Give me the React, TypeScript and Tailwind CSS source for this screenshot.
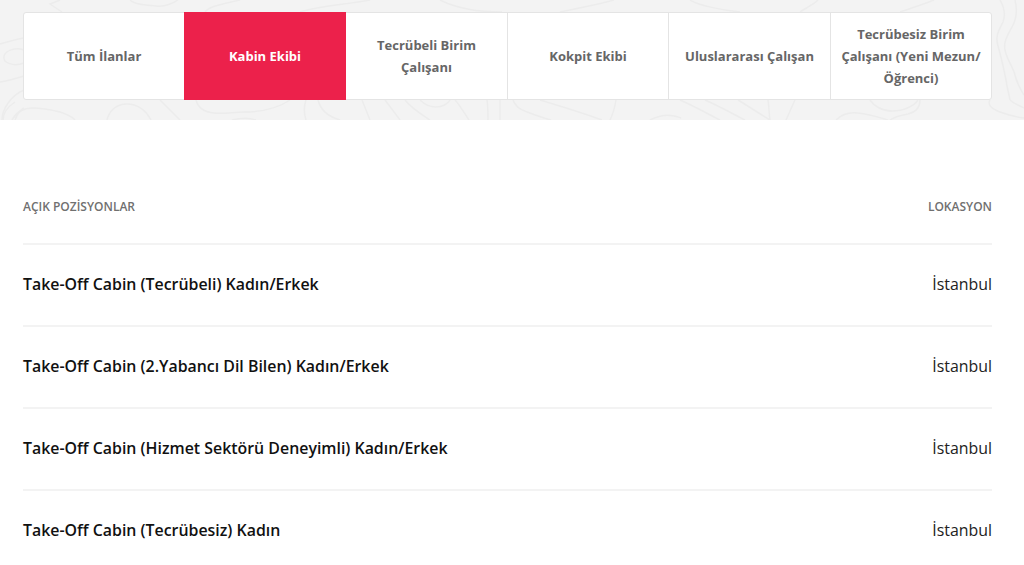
const tabs = [
  "Tüm İlanlar",
  "Kabin Ekibi",
  "Tecrübeli Birim Çalışanı",
  "Kokpit Ekibi",
  "Uluslararası Çalışan",
  "Tecrübesiz Birim Çalışanı (Yeni Mezun/ Öğrenci)",
];

const jobs = [
  "Take-Off Cabin (Tecrübeli) Kadın/Erkek",
  "Take-Off Cabin (2.Yabancı Dil Bilen) Kadın/Erkek",
  "Take-Off Cabin (Hizmet Sektörü Deneyimli) Kadın/Erkek",
  "Take-Off Cabin (Tecrübesiz) Kadın",
];

// faint contour lines behind the tab bar
const contours = [
  // top edge
  "M60 0 50 4 62 12",
  "M130 0c5 5 16 5 26 6 8 1 16-2 22-6",
  "M205 12c4-6 18-8 35-12",
  "M300 12c20-6 50-8 70-12",
  "M440 0c16 8 40 12 62 12",
  "M560 12c20-4 40-8 54-12",
  "M690 0c8 5 30 10 50 12",
  "M800 12c6-4 14-8 18-12",
  "M900 12c12-4 24-8 34-12",
  // left edge
  "M0 44c8-2 16-5 24-6",
  "M24 50c-8-3-18 0-20 6-2 7 10 11 20 7",
  "M0 82c8-1 16-4 24-6",
  "M2 120c0-10 8-24 22-30",
  "M15 120c2-5 5-10 9-12",
  // bottom left
  "M3 120c0-8 6-14 12-18",
  "M12 120c4-8 12-12 20-12 12 0 20 2 28 4 6 2 12 4 15 8",
  "M107 120c2-8 8-16 20-16 12 0 20 8 24 16",
  "M160 100l20 20",
  "M196 100c2 8 8 12 18 13 10 1 20-1 30-1 18 0 34-4 46-12",
  "M306 100c-2 6-2 14 0 20",
  "M318 100c2 8 8 16 22 20",
  "M232 120c8-2 18-2 24 0",
  // bottom middle
  "M362 100l8 20",
  "M385 100l15 20",
  "M405 100c6 8 16 14 25 20",
  "M420 100c4 4 10 7 16 7 6 0 12-3 14-7",
  "M455 100c4 4 10 14 14 20",
  "M487 100c1 6 1 14 1 20",
  "M500 100c0 6 0 14 0 20",
  "M513 100c2 6 8 10 14 12 8 3 16 6 24 8",
  "M540 100c20 6 40 12 62 20",
  "M616 100c-1 6-3 14-6 20",
  "M650 120c8-4 16-6 24-4 4 1 8 2 6 2",
  // bottom right
  "M680 100c14 6 28 14 40 20",
  "M705 100c14 6 28 14 40 20",
  "M738 100c10 6 22 14 32 20",
  "M768 100c1 6 1 14 2 20",
  "M795 100c-3 6-6 14-9 20",
  "M870 100c4 6 12 11 22 11 12 0 22-5 26-11",
  "M920 100c0 8-4 12-12 14-6 1-12 2-18 6",
  "M836 120c6-6 14-8 22-7 10 1 20 4 30 7",
  "M990 100c-3 5 2 9 10 12 8 3 16 5 24 6",
  "M1010 100c4 4 10 6 14 8",
  // right edge
  "M1000 0c4 7 6 14 3 22-4 8-8 14-5 24 3 10 6 24 8 34 1 8 3 14 4 20",
  "M1015 0c2 8 2 17-2 25-4 8-10 16-8 25 2 10 8 17 10 25 2 8 5 14 9 20",
];

function Topo() {
  return (
    <svg
      className="absolute inset-0 h-full w-full"
      viewBox="0 0 1024 120"
      fill="none"
      stroke="#ececec"
      strokeWidth="1.5"
    >
      {contours.map((d) => (
        <path key={d} d={d} />
      ))}
    </svg>
  );
}

export default function App() {
  return (
    <div className="h-[565px] w-full overflow-hidden bg-white font-['Open_Sans',sans-serif]">
      <div className="relative h-[120px] bg-[#f3f3f3] pt-3 pr-[32px] pl-[23px]">
        <Topo />
        <div className="relative grid h-[88px] grid-cols-[160px_162px_161px_161px_162px_1fr] rounded-[3px] border border-[#e4e4e4] bg-white">
          {tabs.map((tab, i) => (
            <div
              key={tab}
              className={
                i === 1
                  ? "-my-px flex items-center justify-center bg-[#ec214b] px-2 text-center text-[13px] leading-[22px] font-bold text-white"
                  : i < 3
                    ? "flex items-center justify-center px-2 text-center text-[13px] leading-[22px] font-bold text-[#666666]"
                    : "flex items-center justify-center border-l border-[#e4e4e4] px-2 text-center text-[13px] leading-[22px] font-bold text-[#666666]"
              }
            >
              {tab}
            </div>
          ))}
        </div>
      </div>
      <div className="pr-[32px] pl-[23px]">
        <div className="flex h-[125px] items-end justify-between border-b-2 border-[#f3f3f3] pb-[28px] text-[12px] leading-4 font-semibold text-[#707070]">
          <span>AÇIK POZİSYONLAR</span>
          <span>LOKASYON</span>
        </div>
        {jobs.map((job) => (
          <div key={job} className="flex h-[82px] items-center justify-between border-b-2 border-[#f3f3f3] text-[15.9px]">
            <span className="font-semibold text-[#111111]">{job}</span>
            <span className="text-[#222222]">İstanbul</span>
          </div>
        ))}
      </div>
    </div>
  );
}
